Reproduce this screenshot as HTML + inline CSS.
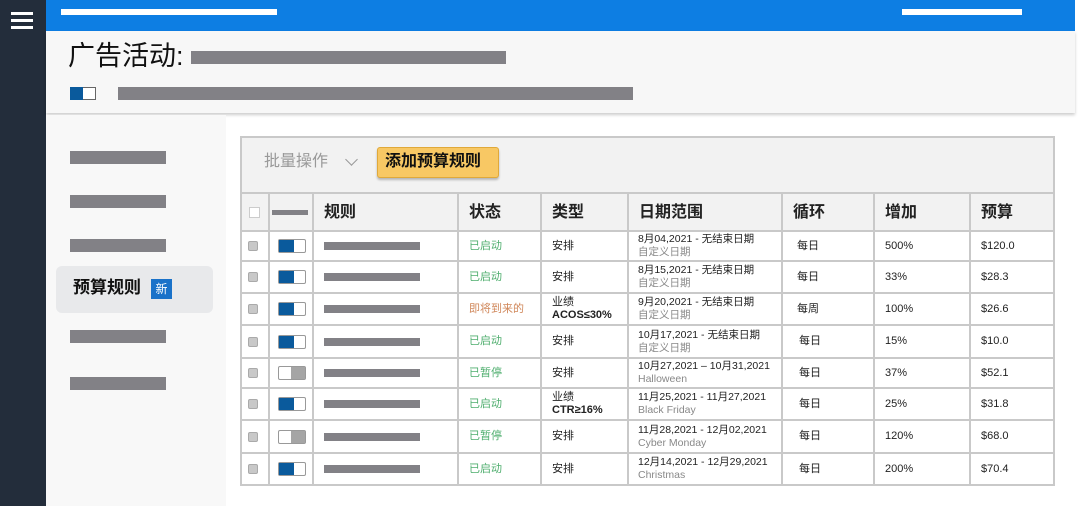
<!DOCTYPE html>
<html><head><meta charset="utf-8"><style>
*{margin:0;padding:0;box-sizing:border-box}
body{width:1080px;height:518px;background:#fff;position:relative;overflow:hidden;font-family:"Liberation Sans","Noto Sans CJK SC",sans-serif}
.a{position:absolute}
.bar{position:absolute;background:#828186}
table{border-collapse:collapse;position:absolute;left:240px;top:192px;table-layout:fixed}
td{border:2px solid #c9c9c9;font-size:11px;color:#222;padding:0 0 0 10px;vertical-align:middle;line-height:13px}
td.d{font-size:10.5px;padding-left:9px}
tr.h td{background:#f2f2f2;font-size:16px;font-weight:bold;height:38px;padding-left:10px;color:#222}
.cb{width:10px;height:10px;background:#c8c8c8;border:1px solid #aaa;border-radius:2px;margin-left:-2px}
.tg{width:28px;height:14px;border:1px solid #999;border-radius:2px;position:relative;background:#fff;margin-left:-2px}
.tg.on::before{content:"";position:absolute;left:0;top:0;width:15px;height:12px;background:#0a5a9c}
.tg.off::after{content:"";position:absolute;right:0;top:0;width:14px;height:12px;background:#a5a5a5}
.rb{width:96px;height:8px;background:#828186}
.g{color:#4fae6e}.o{color:#d0875a}
.s{color:#888}
</style></head><body>
<div class="a" style="left:0;top:0;width:46px;height:506px;background:#232d3b"></div>
<div class="a" style="left:11px;top:12px;width:22px;height:3px;background:#fff"></div>
<div class="a" style="left:11px;top:19px;width:22px;height:3px;background:#fff"></div>
<div class="a" style="left:11px;top:26px;width:22px;height:3px;background:#fff"></div>
<div class="a" style="left:46px;top:0;width:1029px;height:31px;background:#0d7ee3"></div>
<div class="a" style="left:61px;top:9px;width:216px;height:6px;background:#fff"></div>
<div class="a" style="left:902px;top:9px;width:120px;height:6px;background:#fff"></div>
<div class="a" style="left:46px;top:31px;width:1029px;height:82px;background:#f7f7f7;box-shadow:0 2px 3px rgba(0,0,0,.2)"></div>
<div class="a" style="left:68px;top:39px;font-size:27px;color:#111;line-height:34px">广告活动:</div>
<div class="bar" style="left:191px;top:51px;width:315px;height:13px"></div>
<div class="a" style="left:70px;top:87px;width:26px;height:13px;border:1px solid #666;background:#fff"></div>
<div class="a" style="left:70px;top:87px;width:13px;height:13px;background:#0a5a9c"></div>
<div class="bar" style="left:118px;top:87px;width:515px;height:13px"></div>
<div class="a" style="left:46px;top:115px;width:180px;height:391px;background:#f8f8f8"></div>
<div class="bar" style="left:70px;top:151px;width:96px;height:13px"></div>
<div class="bar" style="left:70px;top:195px;width:96px;height:13px"></div>
<div class="bar" style="left:70px;top:239px;width:96px;height:13px"></div>
<div class="a" style="left:56px;top:266px;width:157px;height:47px;background:#e8e9eb;border-radius:6px"></div>
<div class="a" style="left:73px;top:277px;font-size:17px;font-weight:bold;color:#111;line-height:22px">预算规则</div>
<div class="a" style="left:151px;top:279px;width:21px;height:20px;background:#1a72c9;color:#fff;font-size:12px;text-align:center;line-height:20px">新</div>
<div class="bar" style="left:70px;top:330px;width:96px;height:13px"></div>
<div class="bar" style="left:70px;top:377px;width:96px;height:13px"></div>
<div class="a" style="left:240px;top:136px;width:815px;height:58px;background:#f2f2f2;border:2px solid #c9c9c9;border-bottom:none"></div>
<div class="a" style="left:264px;top:151px;font-size:16px;color:#999;line-height:22px">批量操作</div>
<div class="a" style="left:347px;top:155px;width:9px;height:9px;border-right:1px solid #999;border-bottom:1px solid #999;transform:rotate(45deg)"></div>
<div class="a" style="left:377px;top:147px;width:122px;height:31px;background:#f8c864;border:1px solid #e0a93a;border-radius:3px;box-shadow:0 2px 2px rgba(0,0,0,.25);font-size:16px;font-weight:bold;color:#111;padding-left:7px;line-height:27px">添加预算规则</div>
<table>
<colgroup><col style="width:28px"><col style="width:44px"><col style="width:145px"><col style="width:83px"><col style="width:87px"><col style="width:154px"><col style="width:92px"><col style="width:96px"><col style="width:84px"></colgroup>
<tr class="h"><td style="padding-left:7px"><div style="width:11px;height:11px;background:#fff;border:1px solid #ccc"></div></td><td style="padding-left:2px"><div style="width:36px;height:5px;background:#828186"></div></td><td>规则</td><td>状态</td><td>类型</td><td>日期范围</td><td>循环</td><td>增加</td><td>预算</td></tr>
<tr style="height:30px"><td style="padding-left:8px"><div class="cb"></div></td><td><div class="tg on"></div></td><td><div class="rb"></div></td><td class="g">已启动</td><td>安排</td><td class="d">8月04,2021 - 无结束日期<br><span class="s">自定义日期</span></td><td style="padding-left:14px">每日</td><td>500%</td><td>$120.0</td></tr>
<tr style="height:32px"><td style="padding-left:8px"><div class="cb"></div></td><td><div class="tg on"></div></td><td><div class="rb"></div></td><td class="g">已启动</td><td>安排</td><td class="d">8月15,2021 - 无结束日期<br><span class="s">自定义日期</span></td><td style="padding-left:14px">每日</td><td>33%</td><td>$28.3</td></tr>
<tr style="height:32px"><td style="padding-left:8px"><div class="cb"></div></td><td><div class="tg on"></div></td><td><div class="rb"></div></td><td class="o">即将到来的</td><td>业绩<br><b>ACOS≤30%</b></td><td class="d">9月20,2021 - 无结束日期<br><span class="s">自定义日期</span></td><td style="padding-left:14px">每周</td><td>100%</td><td>$26.6</td></tr>
<tr style="height:33px"><td style="padding-left:8px"><div class="cb"></div></td><td><div class="tg on"></div></td><td><div class="rb"></div></td><td class="g">已启动</td><td>安排</td><td class="d">10月17,2021 - 无结束日期<br><span class="s">自定义日期</span></td><td style="padding-left:16px">每日</td><td>15%</td><td>$10.0</td></tr>
<tr style="height:30px"><td style="padding-left:8px"><div class="cb"></div></td><td><div class="tg off"></div></td><td><div class="rb"></div></td><td class="g">已暂停</td><td>安排</td><td class="d">10月27,2021 – 10月31,2021<br><span class="s">Halloween</span></td><td style="padding-left:16px">每日</td><td>37%</td><td>$52.1</td></tr>
<tr style="height:32px"><td style="padding-left:8px"><div class="cb"></div></td><td><div class="tg on"></div></td><td><div class="rb"></div></td><td class="g">已启动</td><td>业绩<br><b>CTR≥16%</b></td><td class="d">11月25,2021 - 11月27,2021<br><span class="s">Black Friday</span></td><td style="padding-left:16px">每日</td><td>25%</td><td>$31.8</td></tr>
<tr style="height:33px"><td style="padding-left:8px"><div class="cb"></div></td><td><div class="tg off"></div></td><td><div class="rb"></div></td><td class="g">已暂停</td><td>安排</td><td class="d">11月28,2021 - 12月02,2021<br><span class="s">Cyber Monday</span></td><td style="padding-left:16px">每日</td><td>120%</td><td>$68.0</td></tr>
<tr style="height:32px"><td style="padding-left:8px"><div class="cb"></div></td><td><div class="tg on"></div></td><td><div class="rb"></div></td><td class="g">已启动</td><td>安排</td><td class="d">12月14,2021 - 12月29,2021<br><span class="s">Christmas</span></td><td style="padding-left:16px">每日</td><td>200%</td><td>$70.4</td></tr>
</table>
</body></html>
